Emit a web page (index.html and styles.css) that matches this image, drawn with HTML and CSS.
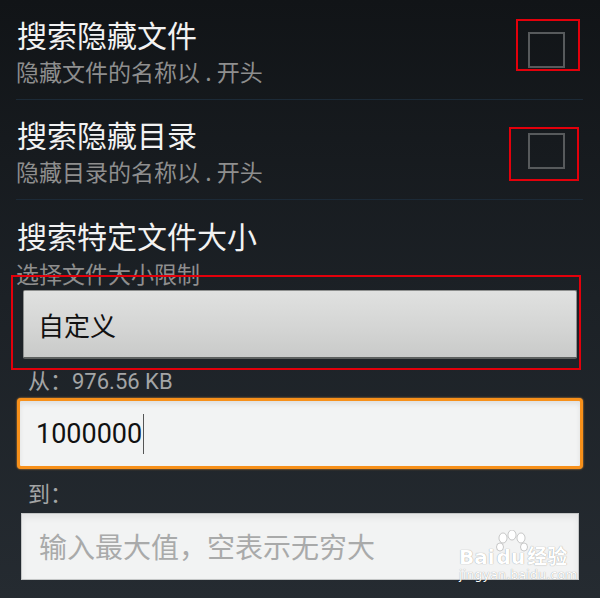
FILE: index.html
```html
<!DOCTYPE html>
<html lang="zh-CN">
<head>
  <meta charset="UTF-8">
  <title>搜索设置</title>
  <link rel="stylesheet" href="styles.css">
</head>
<body>
  <div class="screen">
    <div class="pref">
      <div class="pref-text">
        <div class="pref-title">搜索隐藏文件</div>
        <div class="pref-summary">隐藏文件的名称以 . 开头</div>
      </div>
      <div class="check check-one">
        <span class="box"></span>
        <span class="mark"></span>
      </div>
    </div>

    <div class="pref">
      <div class="pref-text">
        <div class="pref-title">搜索隐藏目录</div>
        <div class="pref-summary">隐藏目录的名称以 . 开头</div>
      </div>
      <div class="check check-two">
        <span class="box"></span>
        <span class="mark"></span>
      </div>
    </div>

    <div class="size-section">
      <div class="pref-title">搜索特定文件大小</div>
      <div class="pref-summary">选择文件大小限制</div>

      <div class="spinner-wrap">
        <div class="spinner">自定义</div>
        <span class="mark"></span>
      </div>

      <div class="field-label">从：976.56 KB</div>
      <div class="field focused">1000000<span class="caret"></span></div>

      <div class="field-label to-label">到：</div>
      <div class="field empty">输入最大值，空表示无穷大</div>
    </div>

    <div class="watermark">
      <svg class="paw" width="34" height="28" viewBox="0 0 34 28">
        <ellipse cx="8" cy="8" rx="4" ry="5" />
        <ellipse cx="17" cy="5" rx="4" ry="5" />
        <ellipse cx="26" cy="8" rx="4" ry="5" />
        <ellipse cx="5" cy="17" rx="3.5" ry="4" />
        <ellipse cx="29" cy="17" rx="3.5" ry="4" />
      </svg>
      <div class="wm-logo">Bai<span class="wm-du">du</span>经验</div>
      <div class="wm-url">jingyan.baidu.com</div>
    </div>
  </div>
</body>
</html>
```

FILE: styles.css
```css
body {
  margin: 0;
  padding: 0;
  font-family: "Noto Sans CJK SC", Roboto, sans-serif;
  background-color: #1a1e22;
}

.screen {
  position: relative;
  width: 600px;
  height: 598px;
  overflow: hidden;
  background: linear-gradient(#111417, #1c2126 50%, #252b31);
}

.pref {
  display: flex;
  align-items: center;
  box-sizing: border-box;
  height: 100px;
  margin: 0 17px 0 16px;
  border-bottom: 1px solid #1c2a37;
}

.pref-text {
  flex: 1;
  padding-top: 2px;
}

.pref-title {
  font-size: 30px;
  line-height: 36px;
  color: #f2f2f2;
  margin-left: 1px;
}

.pref-summary {
  font-size: 23px;
  line-height: 30px;
  margin-top: 4px;
  color: #8e8e8e;
}

/* checkbox with red annotation frame */
.check {
  position: relative;
  width: 37px;
  height: 36px;
  margin-right: 18px;
}

.check .box {
  display: block;
  box-sizing: border-box;
  width: 37px;
  height: 36px;
  border: 2px solid #575a5c;
}

.check-one {
  margin-top: 1px;
}

.check-two {
  margin-top: 2px;
}

.mark {
  position: absolute;
  border: 2px solid #e3000b;
}

.check-one .mark {
  left: -12px;
  right: -15px;
  top: -13px;
  bottom: -3px;
}

.check-two .mark {
  left: -19px;
  right: -14px;
  top: -6px;
  bottom: -12px;
}

.size-section {
  padding: 17px 0 0 16px;
}

.size-section .pref-title {
  line-height: 37px;
}

.spinner-wrap {
  position: relative;
  width: 554px;
  margin: 2px 0 0 7px;
}

.spinner {
  box-sizing: border-box;
  height: 69px;
  padding: 0 14px;
  display: flex;
  align-items: center;
  font-size: 26px;
  color: #111;
  background: linear-gradient(#e0e1e0, #d3d4d3 60%, #c9cac9);
  border: 1px solid #8d8f8e;
  border-bottom: 2px solid #5d605f;
  border-radius: 2px;
}

.spinner-wrap .mark {
  left: -12px;
  right: -4px;
  top: -15px;
  bottom: -11px;
}

.field-label {
  font-size: 22px;
  line-height: 28px;
  margin: 9px 0 0 12px;
  color: #a3a5a6;
  font-family: Roboto, "Noto Sans CJK SC", sans-serif;
}

.field {
  box-sizing: border-box;
  display: flex;
  align-items: center;
  background: #f2f3f3;
}

.focused {
  width: 566px;
  height: 71px;
  margin: 2px 0 0 1px;
  padding: 0 0 0 16px;
  border: 3px solid #f7901a;
  border-radius: 4px;
  box-shadow: 0 0 2px #f6a03a, inset 0 3px 5px rgba(0, 0, 0, 0.08);
  font-family: Roboto, sans-serif;
  font-size: 27px;
  color: #111;
}

.caret {
  display: inline-block;
  width: 1px;
  height: 40px;
  margin-left: 1px;
  background: #555;
}

.to-label {
  margin-top: 12px;
}

.empty {
  width: 558px;
  height: 67px;
  margin: 4px 0 0 5px;
  padding: 0 0 2px 17px;
  border: 1px solid #c4c6c6;
  box-shadow: inset 0 4px 6px rgba(0, 0, 0, 0.06);
  font-size: 28px;
  color: #a9aaaa;
}

/* site watermark, lies over the last field */
.watermark {
  position: absolute;
  left: 459px;
  top: 530px;
  width: 110px;
  color: #fff;
  font-family: "DejaVu Sans", sans-serif;
  text-shadow: 0 0 1px rgba(0, 0, 0, 0.45);
}

.paw {
  position: absolute;
  left: 36px;
  top: 0;
  fill: #fff;
  stroke: rgba(0, 0, 0, 0.25);
  stroke-width: 0.8;
}

.wm-logo {
  margin-top: 16px;
  font-size: 20px;
  font-weight: bold;
  line-height: 22px;
  font-family: "DejaVu Sans", "Noto Sans CJK SC", sans-serif;
}

.wm-du {
  margin: 0 2px;
}

.wm-url {
  font-size: 12.5px;
  line-height: 14px;
  letter-spacing: 0.2px;
}
```
